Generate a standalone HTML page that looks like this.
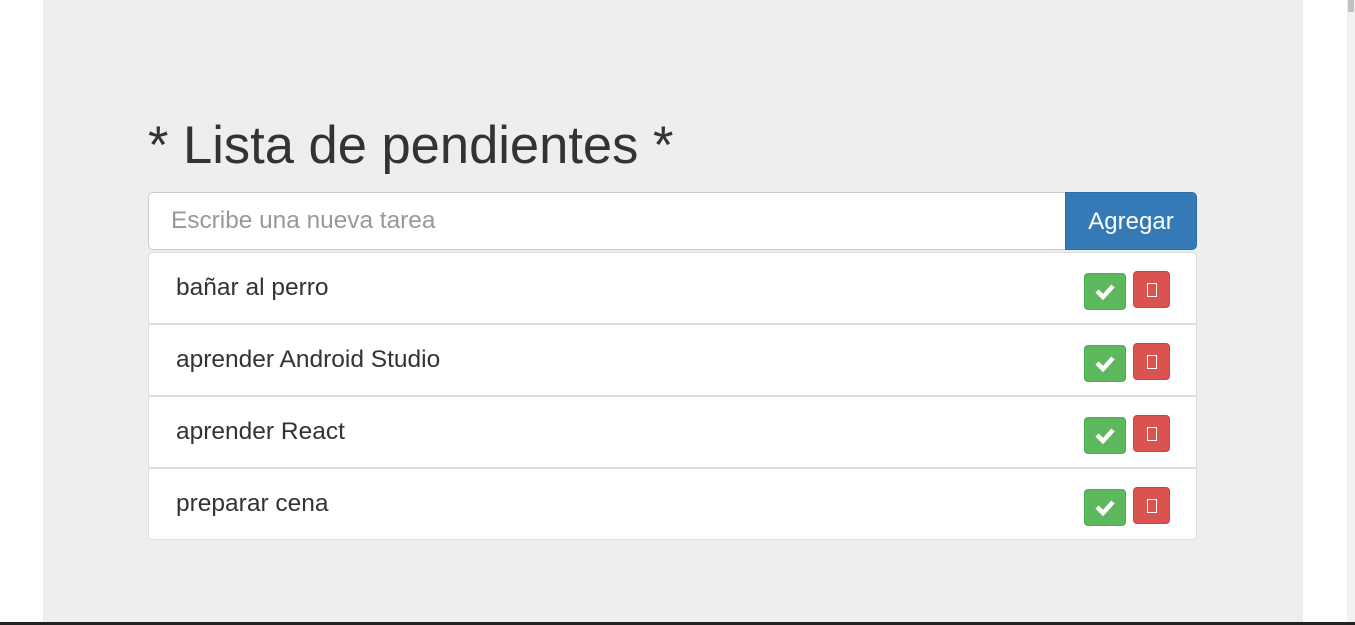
<!DOCTYPE html>
<html><head><style>
html,body{margin:0;width:1355px;height:625px;overflow:hidden}
body{background:#fff;font-family:"Liberation Sans",sans-serif;position:relative}
.jumbo{position:absolute;left:43px;top:-6px;width:1260px;height:640px;background:#eee;border-radius:6px}
h1{position:absolute;left:148px;top:112px;margin:0;font-weight:400;font-size:52.5px;color:#333;line-height:68px}
.inp{position:absolute;left:148px;top:192px;border:1px solid #ccc;border-radius:5px 0 0 5px;background:#fff;font-size:24.4px;color:#999;line-height:56px;padding-left:22px;box-sizing:border-box;width:918px;height:58px}
.btn{position:absolute;left:1065px;top:192px;width:132px;height:58px;background:#337ab7;border:1px solid #2e6da4;border-radius:0 5px 5px 0;color:#fff;font-size:24px;line-height:58px;text-align:center;box-sizing:border-box}
.list{position:absolute;left:148px;top:252px;width:1049px;height:288px;border:1px solid #ddd;border-radius:4px;background:#fff;box-sizing:border-box}
.item{height:72px;border-bottom:2px solid #ddd;box-sizing:border-box;position:relative;font-size:24.5px;color:#333;line-height:70px;padding-left:27px}
.item:last-child{border-bottom:none}
.g{position:absolute;left:935px;top:20px;width:42px;height:37px;background:#5cb85c;border:1px solid #4cae4c;border-radius:4px;box-sizing:border-box}
.g svg{position:absolute;left:0;top:0}
.r{position:absolute;left:984px;top:18px;width:37px;height:37px;background:#d9534f;border:1px solid #d43f3a;border-radius:4px;box-sizing:border-box}
.r:after{content:"";position:absolute;left:13px;top:11px;width:8px;height:12px;border:1px solid #fff}
.sb{position:absolute;left:1347px;top:0;width:8px;height:623px;background:#f1f1f1}
.sb i{position:absolute;left:1px;top:0;width:6px;height:12px;background:#c1c1c1}
.bot{position:absolute;left:0;top:622px;width:1355px;height:3px;background:#222}
</style></head><body>
<div class="jumbo"></div>
<h1>* Lista de pendientes *</h1>
<div class="inp">Escribe una nueva tarea</div>
<div class="btn">Agregar</div>
<div class="list">
<div class="item">bañar al perro<span class="g"><svg width="40" height="35" viewBox="0 0 40 35"><path d="M12 17 L18 23 L28 12" stroke="#fff" stroke-width="4.5" fill="none"/></svg></span><span class="r"></span></div>
<div class="item">aprender Android Studio<span class="g"><svg width="40" height="35" viewBox="0 0 40 35"><path d="M12 17 L18 23 L28 12" stroke="#fff" stroke-width="4.5" fill="none"/></svg></span><span class="r"></span></div>
<div class="item">aprender React<span class="g"><svg width="40" height="35" viewBox="0 0 40 35"><path d="M12 17 L18 23 L28 12" stroke="#fff" stroke-width="4.5" fill="none"/></svg></span><span class="r"></span></div>
<div class="item">preparar cena<span class="g"><svg width="40" height="35" viewBox="0 0 40 35"><path d="M12 17 L18 23 L28 12" stroke="#fff" stroke-width="4.5" fill="none"/></svg></span><span class="r"></span></div>
</div>
<div class="sb"><i></i></div>
<div class="bot"></div>
</body></html>
